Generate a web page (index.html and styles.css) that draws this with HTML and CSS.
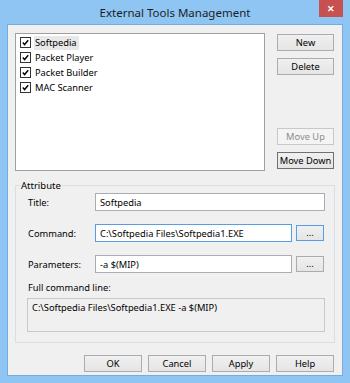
FILE: index.html
```html
<!DOCTYPE html>
<html lang="en">
<head>
  <meta charset="UTF-8">
  <title>External Tools Management</title>
  <link rel="stylesheet" href="styles.css">
</head>
<body>

  <div class="window">
    <div class="titlebar">
      <span></span>
      <span class="title">External Tools Management</span>
      <span class="close">&#x2715;</span>
    </div>

    <div class="client">
      <div class="top-row">
        <div class="listbox">
          <div class="item"><span class="check"><svg viewBox="0 0 10 10"><path d="M2 5 L4 7.3 L8 2.6" fill="none" stroke="#000" stroke-width="1.6"/></svg></span><span class="item-text selected">Softpedia</span></div>
          <div class="item"><span class="check"><svg viewBox="0 0 10 10"><path d="M2 5 L4 7.3 L8 2.6" fill="none" stroke="#000" stroke-width="1.6"/></svg></span><span class="item-text">Packet Player</span></div>
          <div class="item"><span class="check"><svg viewBox="0 0 10 10"><path d="M2 5 L4 7.3 L8 2.6" fill="none" stroke="#000" stroke-width="1.6"/></svg></span><span class="item-text">Packet Builder</span></div>
          <div class="item"><span class="check"><svg viewBox="0 0 10 10"><path d="M2 5 L4 7.3 L8 2.6" fill="none" stroke="#000" stroke-width="1.6"/></svg></span><span class="item-text">MAC Scanner</span></div>
        </div>
        <div class="side-buttons">
          <button class="btn btn-new">New</button>
          <button class="btn btn-delete">Delete</button>
          <button class="btn btn-up" disabled>Move Up</button>
          <button class="btn btn-down">Move Down</button>
        </div>
      </div>

      <fieldset class="group">
        <legend>Attribute</legend>

        <div class="row">
          <label>Title:</label>
          <input type="text" class="field field-wide" value="Softpedia">
        </div>

        <div class="row">
          <label>Command:</label>
          <input type="text" class="field focused" value="C:\Softpedia Files\Softpedia1.EXE">
          <button class="btn btn-dots focused-btn">...</button>
        </div>

        <div class="row">
          <label>Parameters:</label>
          <input type="text" class="field" value="-a $(MIP)">
          <button class="btn btn-dots">...</button>
        </div>

        <div class="full-label">Full command line:</div>
        <div class="full-box">C:\Softpedia Files\Softpedia1.EXE -a $(MIP)</div>
      </fieldset>

      <div class="bottom-buttons">
        <button class="btn btn-bottom">OK</button>
        <button class="btn btn-bottom">Cancel</button>
        <button class="btn btn-bottom">Apply</button>
        <button class="btn btn-bottom">Help</button>
      </div>
    </div>
  </div>

</body>
</html>
```

FILE: styles.css
```css
body {
  margin: 0;
  font-family: 'Noto Sans', 'Open Sans', sans-serif;
  font-size: 9.3px;
  color: #000;
}

.window {
  width: 350px;
  height: 383px;
  box-sizing: border-box;
  background-color: #8ec5f3;
  padding: 0 8px 8px 8px;
  display: flex;
  flex-direction: column;
}

.titlebar {
  height: 25px;
  display: grid;
  grid-template-columns: 1fr auto 1fr;
  align-items: start;
  margin: 0 -8px;
}

.title {
  font-size: 11.5px;
  line-height: 25px;
  color: #1e1e1e;
}

.close {
  justify-self: end;
  margin-right: 7px;
  width: 24px;
  height: 17px;
  background-color: #c75050;
  color: white;
  font-size: 9px;
  font-weight: bold;
  line-height: 17px;
  text-align: center;
}

.client {
  flex: 1;
  background-color: #f0f0f0;
  box-shadow: 0 0 0 1px #77ace0;
  padding: 8px 7px 0 7px;
  display: flex;
  flex-direction: column;
}

.top-row {
  display: flex;
  gap: 12px;
}

.listbox {
  width: 250px;
  height: 138px;
  box-sizing: border-box;
  background-color: white;
  border: 1px solid #a0a0a0;
  padding: 1px 4px;
}

.item {
  height: 15px;
  display: flex;
  align-items: center;
}

.check {
  width: 9px;
  height: 9px;
  border: 1px solid #333;
  background: white;
  display: flex;
  margin-right: 3px;
}

.check svg {
  width: 9px;
  height: 9px;
}

.item-text {
  padding: 0 2px 0 1px;
  line-height: 14px;
}

.selected {
  background-color: #e8e8e8;
}

.side-buttons {
  display: flex;
  flex-direction: column;
  width: 57px;
}

.btn {
  font-family: inherit;
  font-size: 9.3px;
  height: 17px;
  padding: 0;
  border: 1px solid #acacac;
  background: linear-gradient(#f0f0f0, #e5e5e5);
  color: #000;
  box-sizing: border-box;
}

.btn-new {
  margin-top: 1px;
}

.btn-delete {
  margin-top: 7px;
}

.btn-up {
  margin-top: 53px;
  color: #8d8d8d;
  border-color: #c8c8c8;
  background: #f4f4f4;
}

.btn-down {
  margin-top: 7px;
  border-color: #707070;
}

.group {
  margin: 8px 0 0 0;
  width: 320px;
  box-sizing: border-box;
  border: 1px solid #d5dfe5;
  padding: 1px 9px 10px 12px;
}

.group legend {
  padding: 0 1px;
  margin-left: -8px;
  font-size: 9.5px;
  line-height: 13px;
}

.row {
  display: flex;
  align-items: center;
  height: 18px;
  margin-bottom: 13px;
}

.row label {
  width: 67px;
}

.field {
  font-family: inherit;
  font-size: 9.3px;
  height: 18px;
  width: 197px;
  box-sizing: border-box;
  border: 1px solid #abadb3;
  padding: 0 4px;
  margin: 0;
  background: white;
}

.field-wide {
  width: 230px;
}

.focused {
  border-color: #569de5;
}

.btn-dots {
  width: 28px;
  height: 16px;
  margin-left: 4px;
  line-height: 10px;
}

.focused-btn {
  border-color: #569de5;
}

.full-label {
  margin-top: -4px;
  line-height: 12px;
}

.full-box {
  margin-top: 4px;
  width: 298px;
  height: 34px;
  box-sizing: border-box;
  border: 1px solid #c8c8c8;
  padding: 2px 4px;
  margin-left: -1px;
}

.bottom-buttons {
  display: flex;
  justify-content: flex-end;
  gap: 6px;
  margin-top: 12px;
  padding-right: 1px;
}

.btn-bottom {
  width: 58px;
  height: 17px;
}
```
